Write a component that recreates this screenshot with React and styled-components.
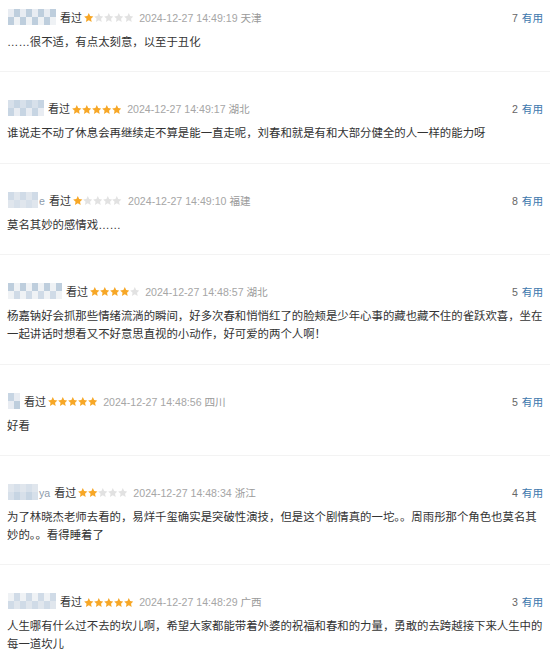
import React from "react";
import styled, { createGlobalStyle } from "styled-components";

const GlobalStyle = createGlobalStyle`
  html, body {
    margin: 0;
    padding: 0;
    background: #fff;
  }
  body {
    font-family: "Liberation Sans", "Noto Sans CJK SC", sans-serif;
    color: #333;
  }
`;

const reviews = [
  { name: 45, stars: 1, time: "2024-12-27 14:49:19", loc: "天津", votes: 7, text: "……很不适，有点太刻意，以至于丑化" },
  { name: 35, stars: 5, time: "2024-12-27 14:49:17", loc: "湖北", votes: 2, text: "谁说走不动了休息会再继续走不算是能一直走呢，刘春和就是有和大部分健全的人一样的能力呀" },
  { name: 29, tail: "e", stars: 1, time: "2024-12-27 14:49:10", loc: "福建", votes: 8, text: "莫名其妙的感情戏……" },
  { name: 55, stars: 4, time: "2024-12-27 14:48:57", loc: "湖北", votes: 5, text: "杨嘉钠好会抓那些情绪流淌的瞬间，好多次春和悄悄红了的脸颊是少年心事的藏也藏不住的雀跃欢喜，坐在一起讲话时想看又不好意思直视的小动作，好可爱的两个人啊！" },
  { name: 12, stars: 5, time: "2024-12-27 14:48:56", loc: "四川", votes: 5, text: "好看" },
  { name: 29, tail: "ya", stars: 2, time: "2024-12-27 14:48:34", loc: "浙江", votes: 4, text: "为了林晓杰老师去看的，易烊千玺确实是突破性演技，但是这个剧情真的一坨。。周雨彤那个角色也莫名其妙的。。看得睡着了" },
  { name: 47, stars: 5, time: "2024-12-27 14:48:29", loc: "广西", votes: 3, text: "人生哪有什么过不去的坎儿啊，希望大家都能带着外婆的祝福和春和的力量，勇敢的去跨越接下来人生中的每一道坎儿" },
];

const palette = ["#d3dde8", "#c2d1e0", "#e6ebf1", "#b8c9da", "#eef1f5", "#cbd8e5", "#dde4ec"];

function cells(width, seed) {
  const cols = Math.max(2, Math.round(width / 6));
  const out = [];
  for (let r = 0; r < 2; r++) {
    for (let c = 0; c < cols; c++) {
      const k = (c * 7 + r * 3 + seed * 5 + ((c * c) % 4)) % palette.length;
      out.push(r === 0 ? palette[(k + 2) % palette.length] : palette[k]);
    }
  }
  return { cols, colors: out };
}

function Star({ on }) {
  return (
    <StarSvg viewBox="1 1 18 18" $on={on}>
      <path d="M10 1.2l2.6 5.6 6.1.7-4.5 4.2 1.2 6.1L10 14.8l-5.4 3 1.2-6.1L1.3 7.5l6.1-.7z" />
    </StarSvg>
  );
}

function Review({ r, i }) {
  const m = cells(r.name, i);
  return (
    <Item>
      <Header>
        <User>
          <Mosaic $cols={m.cols}>
            {m.colors.map((c, j) => (
              <Cell key={j} $bg={c} />
            ))}
          </Mosaic>
          {r.tail && <Tail>{r.tail}</Tail>}
        </User>
        <Watched>看过</Watched>
        <Stars>
          {[0, 1, 2, 3, 4].map((s) => (
            <Star key={s} on={s < r.stars} />
          ))}
        </Stars>
        <Time>{r.time}</Time>
        <Loc>{r.loc}</Loc>
        <Votes>
          <Count>{r.votes}</Count>
          <Useful>有用</Useful>
        </Votes>
      </Header>
      <Body>{r.text}</Body>
    </Item>
  );
}

export default function App() {
  return (
    <>
      <GlobalStyle />
      <List>
        {reviews.map((r, i) => (
          <Review key={i} r={r} i={i} />
        ))}
      </List>
    </>
  );
}

const List = styled.div`
  width: 550px;
  display: flex;
  flex-direction: column;
`;

const Item = styled.div`
  padding: 28px 7px 20.4px;
  border-bottom: 1px solid #f3f3f3;

  &:first-child {
    padding-top: 9px;
  }
`;

const Header = styled.div`
  display: flex;
  align-items: center;
  height: 18px;
  font-size: 10.6px;
  line-height: 18px;
  padding-left: 1px;
`;

const User = styled.div`
  display: flex;
  align-items: center;
  margin-top: -2px;
`;

const Mosaic = styled.div`
  display: grid;
  grid-template-columns: repeat(${(p) => p.$cols}, 6px);
  grid-template-rows: 8px 8px;
  opacity: 0.9;
  filter: blur(0.6px);
`;

const Cell = styled.div`
  background: ${(p) => p.$bg};
`;

const Tail = styled.span`
  color: #8d9bab;
  font-size: 10.6px;
  margin-left: 1px;
  margin-top: 2px;
`;

const Watched = styled.span`
  color: #333;
  font-size: 11px;
  margin-left: 4px;
`;

const Stars = styled.span`
  display: flex;
  gap: 0.3px;
  margin-left: 2px;
  margin-right: 6px;
`;

const StarSvg = styled.svg`
  width: 9.6px;
  height: 9.6px;
  fill: ${(p) => (p.$on ? "#f7a726" : "#e2e2e2")};
`;

const Time = styled.span`
  color: #a6a6a6;
`;

const Loc = styled.span`
  color: #9a9a9a;
  margin-left: 3px;
`;

const Votes = styled.span`
  margin-left: auto;
  display: flex;
  gap: 4px;
`;

const Count = styled.span`
  color: #666;
`;

const Useful = styled.span`
  color: #3d77ad;
`;

const Body = styled.div`
  margin-top: 6px;
  font-size: 11.4px;
  line-height: 18px;
  color: #333;
  word-break: break-all;
`;
